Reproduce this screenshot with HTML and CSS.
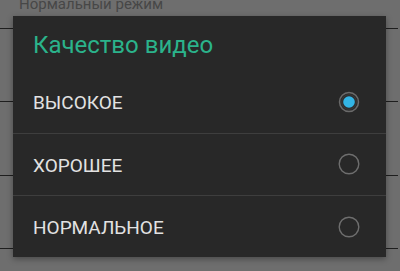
FILE: index.html
```html
<!DOCTYPE html>
<html lang="ru">
<head>
<meta charset="utf-8">
<link rel="stylesheet" href="styles.css">
</head>
<body>
<div class="screen">
  <div class="list">
    <div class="list-head">Нормальный режим</div>
    <div class="list-row"></div>
    <div class="list-row tall"></div>
    <div class="list-row"></div>
  </div>
  <div class="dialog">
    <div class="title">Качество видео</div>
    <div class="option">
      <span class="label">ВЫСОКОЕ</span>
      <svg class="radio" width="24" height="24" viewBox="0 0 24 24">
        <circle cx="12" cy="12" r="9.5" fill="#2b2b2b" stroke="#6a6a6a" stroke-width="1.5"/>
        <circle cx="12" cy="12" r="7.3" fill="none" stroke="#3a3a3a" stroke-width="1"/>
        <circle cx="12" cy="12" r="5.8" fill="#33b5e5"/>
      </svg>
    </div>
    <div class="option">
      <span class="label">ХОРОШЕЕ</span>
      <svg class="radio" width="24" height="24" viewBox="0 0 24 24">
        <circle cx="12" cy="12" r="9.8" fill="none" stroke="#6e6e6e" stroke-width="1.4"/>
      </svg>
    </div>
    <div class="option last">
      <span class="label">НОРМАЛЬНОЕ</span>
      <svg class="radio" width="24" height="24" viewBox="0 0 24 24">
        <circle cx="12" cy="12" r="9.8" fill="none" stroke="#6e6e6e" stroke-width="1.4"/>
      </svg>
    </div>
  </div>
</div>
</body>
</html>
```
FILE: styles.css
```css
html, body {
  margin: 0;
  padding: 0;
}
body {
  width: 400px;
  height: 271px;
  overflow: hidden;
  background: #6e6e6e;
  font-family: Roboto, "Noto Sans", sans-serif;
}
.screen {
  position: relative;
  width: 400px;
  height: 271px;
  overflow: hidden;
}
.list {
  width: 398px;
  display: flow-root;
}
.list-head {
  box-sizing: border-box;
  border-bottom: 1px solid #1e1e1e;
  padding-left: 19px;
  font-size: 15px;
  line-height: 20px;
  margin-top: -6px;
  height: 35px;
  color: #474747;
}
.list-row {
  height: 73px;
  box-sizing: border-box;
  border-bottom: 1px solid #1e1e1e;
}
.list-row.tall {
  height: 74px;
}
.dialog {
  position: absolute;
  left: 13px;
  top: 16px;
  width: 373px;
  height: 241px;
  background: #282828;
  box-shadow: 0 2px 6px rgba(0, 0, 0, 0.35);
  display: flex;
  flex-direction: column;
}
.title {
  height: 55px;
  box-sizing: border-box;
  padding: 15px 0 0 20px;
  font-size: 24px;
  line-height: 28px;
  color: #2bb38b;
}
.option {
  height: 63px;
  box-sizing: border-box;
  border-bottom: 1px solid #3e3e3e;
  display: flex;
  align-items: center;
  justify-content: space-between;
  padding: 0 25px 0 20px;
}
.option.last {
  border-bottom: none;
  height: 61px;
}
.label {
  font-size: 19px;
  line-height: 22px;
  padding-top: 3px;
  color: #e2e2e2;
}
.radio {
  display: block;
}
```
